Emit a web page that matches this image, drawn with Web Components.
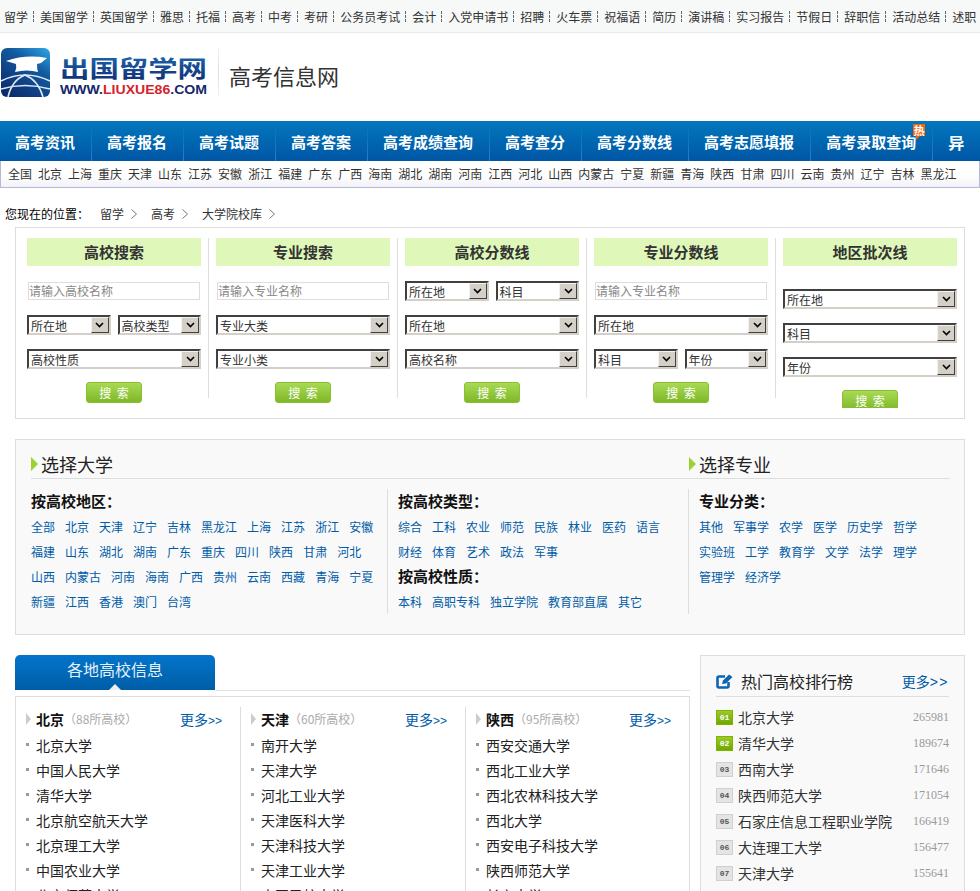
<!DOCTYPE html>
<html lang="zh-CN">
<head>
<meta charset="utf-8">
<title>高考信息网</title>
<style>
    html, body { margin: 0; padding: 0; }
    body {
        width: 980px;
        height: 891px;
        overflow: hidden;
        background: #fff;
        color: #333;
        font: 12px "Noto Sans CJK SC", sans-serif;
    }
    .lower { display: flex; gap: 10px; margin: 20px 15px 0; align-items: flex-start; }
</style>
</head>
<body>
<top-bar items="留学 美国留学 英国留学 雅思 托福 高考 中考 考研 公务员考试 会计 入党申请书 招聘 火车票 祝福语 简历 演讲稿 实习报告 节假日 辞职信 活动总结 述职"></top-bar>
<site-header>高考信息网</site-header>
<main-nav></main-nav>
<province-bar items="全国 北京 上海 重庆 天津 山东 江苏 安徽 浙江 福建 广东 广西 海南 湖北 湖南 河南 江西 河北 山西 内蒙古 宁夏 新疆 青海 陕西 甘肃 四川 云南 贵州 辽宁 吉林 黑龙江"></province-bar>
<bread-crumb items="留学 高考 大学院校库"></bread-crumb>

<search-panel>
    <search-col title="高校搜索">
        <form-row><text-box>请输入高校名称</text-box></form-row>
        <form-row><old-select>所在地</old-select><old-select>高校类型</old-select></form-row>
        <form-row><old-select>高校性质</old-select></form-row>
        <go-button></go-button>
    </search-col>
    <search-col title="专业搜索">
        <form-row><text-box>请输入专业名称</text-box></form-row>
        <form-row><old-select>专业大类</old-select></form-row>
        <form-row><old-select>专业小类</old-select></form-row>
        <go-button></go-button>
    </search-col>
    <search-col title="高校分数线">
        <form-row><old-select>所在地</old-select><old-select>科目</old-select></form-row>
        <form-row><old-select>所在地</old-select></form-row>
        <form-row><old-select>高校名称</old-select></form-row>
        <go-button></go-button>
    </search-col>
    <search-col title="专业分数线">
        <form-row><text-box>请输入专业名称</text-box></form-row>
        <form-row><old-select>所在地</old-select></form-row>
        <form-row><old-select>科目</old-select><old-select>年份</old-select></form-row>
        <go-button></go-button>
    </search-col>
    <search-col title="地区批次线" style="--lead: 23px">
        <form-row><old-select>所在地</old-select></form-row>
        <form-row><old-select>科目</old-select></form-row>
        <form-row><old-select>年份</old-select></form-row>
        <go-button></go-button>
    </search-col>
</search-panel>

<pick-panel>
    <pick-col slot="a" style="--w: 356px">
        <b-head>按高校地区：</b-head>
        <link-list items="全部 北京 天津 辽宁 吉林 黑龙江 上海 江苏 浙江 安徽 福建 山东 湖北 湖南 广东 重庆 四川 陕西 甘肃 河北 山西 内蒙古 河南 海南 广西 贵州 云南 西藏 青海 宁夏 新疆 江西 香港 澳门 台湾"></link-list>
    </pick-col>
    <pick-col slot="b" style="--w: 290px">
        <b-head>按高校类型：</b-head>
        <link-list items="综合 工科 农业 师范 民族 林业 医药 语言 财经 体育 艺术 政法 军事"></link-list>
        <b-head>按高校性质：</b-head>
        <link-list items="本科 高职专科 独立学院 教育部直属 其它"></link-list>
    </pick-col>
    <pick-col slot="c" style="--w: 250px">
        <b-head>专业分类：</b-head>
        <link-list items="其他 军事学 农学 医学 历史学 哲学 实验班 工学 教育学 文学 法学 理学 管理学 经济学"></link-list>
    </pick-col>
</pick-panel>

<div class="lower">
    <school-board>
        <school-col name="北京" count="88" items="北京大学 中国人民大学 清华大学 北京航空航天大学 北京理工大学 中国农业大学 北京师范大学"></school-col>
        <school-col name="天津" count="60" items="南开大学 天津大学 河北工业大学 天津医科大学 天津科技大学 天津工业大学 中国民航大学"></school-col>
        <school-col name="陕西" count="95" items="西安交通大学 西北工业大学 西北农林科技大学 西北大学 西安电子科技大学 陕西师范大学 长安大学"></school-col>
    </school-board>
    <rank-panel>
        <rank-row n="01" count="265981" hot>北京大学</rank-row>
        <rank-row n="02" count="189674" hot>清华大学</rank-row>
        <rank-row n="03" count="171646">西南大学</rank-row>
        <rank-row n="04" count="171054">陕西师范大学</rank-row>
        <rank-row n="05" count="166419">石家庄信息工程职业学院</rank-row>
        <rank-row n="06" count="156477">大连理工大学</rank-row>
        <rank-row n="07" count="155641">天津大学</rank-row>
        <rank-row n="08" count="155102">中国人民大学</rank-row>
    </rank-panel>
</div>

<script>
class Base extends HTMLElement {
    connectedCallback() {
        if (this.shadowRoot) return;
        this.attachShadow({ mode: 'open' });
        this.shadowRoot.innerHTML = `<style>${this.css()}</style>${this.html()}`;
    }
    list() {
        return (this.getAttribute('items') || '').split(' ').filter(Boolean);
    }
    html() { return '<slot></slot>'; }
    css() { return ':host { display: block; }'; }
}

class TopBar extends Base {
    css() {
        return `
            :host { display: flex; height: 32px; padding-left: 4px; overflow: hidden; white-space: nowrap;
                    align-items: center; background: #f7f8f8; border-bottom: 1px solid #e8eaea; }
            a { color: #333; text-decoration: none; flex: none; }
            i { flex: none; width: 0; height: 11px; margin: 0 6px 0 5px; border-left: 1px dashed #666; }
        `;
    }
    html() {
        return this.list().map(t => `<a href="#">${t}</a>`).join('<i></i>');
    }
}

class SiteHeader extends Base {
    css() {
        return `
            :host { display: flex; height: 74px; padding-top: 14px; align-items: flex-start; }
            svg { display: block; margin: 1px 10px 0 0; flex: none; }
            i { width: 1px; height: 49px; background: linear-gradient(#f4f4f4, #dcdcdc 50%, #f4f4f4); }
            span { margin-left: 10px; font-size: 22px; line-height: 56px; color: #333; }
        `;
    }
    html() {
        return `
            <svg width="208" height="50" viewBox="0 0 208 50">
                <defs>
                    <linearGradient id="ico" x1="0.9" y1="0" x2="0.2" y2="1">
                        <stop offset="0" stop-color="#2b9fdf"/>
                        <stop offset="0.35" stop-color="#135a9f"/>
                        <stop offset="1" stop-color="#0b2a6b"/>
                    </linearGradient>
                    <linearGradient id="word" x1="0" y1="0" x2="0" y2="1">
                        <stop offset="0" stop-color="#1f6fb8"/>
                        <stop offset="1" stop-color="#0d2a6e"/>
                    </linearGradient>
                </defs>
                <rect x="1" y="0" width="49" height="49" rx="6" fill="url(#ico)"/>
                <path d="M6 13 Q26 6 47 10 L41 15 L37 16 Q37 21 38 24 Q27 21 15 24 Q17 20 16 16 Z" fill="#fff"/>
                <path d="M1 33 Q25 21 50 33 M1 41 Q25 34 50 41" fill="none" stroke="#dfe9f3" stroke-width="1.4"/>
                <path d="M8 49 Q12 32 25 27 Q38 32 43 49" fill="none" stroke="#dfe9f3" stroke-width="1.6"/>
                <text x="60" y="29" font-family="Noto Sans CJK SC, sans-serif" font-weight="700" font-size="23"
                      textLength="147" lengthAdjust="spacingAndGlyphs" fill="url(#word)">出国留学网</text>
                <text x="60" y="46" font-family="Liberation Sans, sans-serif" font-weight="700" font-size="13"
                      textLength="147" lengthAdjust="spacingAndGlyphs" fill="#16286a">WWW.<tspan fill="#d7222b">LIUXUE86</tspan>.COM</text>
            </svg>
            <i></i><span><slot></slot></span>
        `;
    }
}

class MainNav extends Base {
    css() {
        return `
            :host { display: flex; height: 40px; overflow: hidden; background: linear-gradient(#0277bd, #0056a5); }
            a { position: relative; flex: none; height: 120px; padding: 8px 17px 0 15px;
                color: #fff; font-size: 15px; font-weight: 700; line-height: 26px; text-decoration: none; white-space: nowrap; }
            a::after { content: ''; position: absolute; top: 3px; right: 0; width: 1px; height: 37px;
                background: linear-gradient(rgba(120,185,230,0), rgba(120,185,230,.4)); }
            a.wrap { width: 16px; font-size: 16px; white-space: normal; }
            a.wrap::after { display: none; }
            em { position: absolute; left: 102px; top: 3px; width: 12px; height: 12px; background: #f4660c;
                 color: #fff; font: 700 11px/12px "Noto Sans CJK SC", sans-serif; text-align: center; }
            em::after { content: ''; position: absolute; left: 3px; top: 12px; border: 2px solid transparent;
                 border-top-color: #f4660c; border-left-color: #f4660c; }
        `;
    }
    html() {
        return ['高考资讯', '高考报名', '高考试题', '高考答案', '高考成绩查询', '高考查分', '高考分数线', '高考志愿填报']
            .map(t => `<a href="#">${t}</a>`).join('')
            + '<a href="#">高考录取查询<em>热</em></a><a href="#" class="wrap">异地高考</a>';
    }
}

class ProvinceBar extends Base {
    css() {
        return `
            :host { display: flex; gap: 6px; height: 26px; padding-left: 7px;
                    border: 1px solid #b5b9d6; border-width: 0 1px 1px; line-height: 26px;
                    background: linear-gradient(#fff 55%, #f1f1f8); }
            a { color: #333; text-decoration: none; white-space: nowrap; }
        `;
    }
    html() {
        return this.list().map(t => `<a href="#">${t}</a>`).join('');
    }
}

class BreadCrumb extends Base {
    css() {
        return `
            :host { display: flex; align-items: center; height: 27px; padding: 12px 0 0 5px; line-height: 24px; }
            b { font-weight: 400; color: #000; margin-right: 11px; }
            a { color: #333; text-decoration: none; }
            svg { margin: 0 14px 0 7px; }
        `;
    }
    html() {
        const arrow = '<svg width="6" height="10" viewBox="0 0 6 10"><path d="M.5 .5 L5.5 5 L.5 9.5" fill="none" stroke="#777"/></svg>';
        return '<b>您现在的位置：</b>' + this.list().map(t => `<a href="#">${t}</a>${arrow}`).join('');
    }
}

class SearchPanel extends Base {
    css() {
        return `
            :host { display: block; box-sizing: border-box; width: 950px; margin-left: 15px;
                    padding: 10px 7px 10px 11px; border: 1px solid #ddd; }
            div { display: flex; height: 170px; overflow: hidden; }
        `;
    }
    html() { return '<div><slot></slot></div>'; }
}

class SearchCol extends Base {
    css() {
        return `
            :host { display: block; flex: none; width: 174px; height: 160px;
                    padding-right: 7px; margin-right: 7px; border-right: 1px solid #ddd; }
            :host(:last-child) { padding: 0; margin: 0; border: 0; }
            h3 { margin: 0; height: 28px; background: #dff7b8; color: #333; text-align: center;
                 font-size: 15px; font-weight: 700; line-height: 27px; }
        `;
    }
    html() { return `<h3>${this.getAttribute('title')}</h3><slot></slot>`; }
}

class FormRow extends Base {
    css() {
        return `
            :host { display: flex; gap: 7px; height: 20px; margin-top: 14px; align-items: center; }
            :host(:first-child) { margin-top: var(--lead, 15px); }
        `;
    }
}

class TextBox extends Base {
    css() {
        return `
            :host { display: block; flex: 1; box-sizing: border-box; height: 18px; margin: 0 1px;
                    border: 1px solid #ddd; color: #888; line-height: 16px; white-space: nowrap; }
        `;
    }
}

class OldSelect extends Base {
    css() {
        return `
            :host { display: flex; flex: 1; min-width: 0; box-sizing: border-box; height: 20px; background: #fff;
                    border: 2px solid; border-color: #404040 #d4d0c8 #d4d0c8 #404040; color: #333; }
            span { flex: 1; padding-left: 2px; line-height: 17px; white-space: nowrap; overflow: hidden; }
            i { flex: none; display: flex; align-items: center; justify-content: center; box-sizing: border-box;
                width: 18px; height: 16px; background: #d4d0c8; border: 1px solid; border-color: #f4f2ee #404040 #404040 #f4f2ee; }
        `;
    }
    html() {
        return `<span><slot></slot></span>
            <i><svg width="9" height="6" viewBox="0 0 9 6"><path d="M1 1 L4.5 4.5 L8 1" fill="none" stroke="#000" stroke-width="1.6"/></svg></i>`;
    }
}

class GoButton extends Base {
    css() {
        return `
            :host { display: block; box-sizing: border-box; width: 56px; height: 21px; margin: 13px auto 0;
                    border: 1px solid #8abf31; border-radius: 3px; background: linear-gradient(#a8da55, #7fb827);
                    color: #fff; text-align: center; line-height: 19px; word-spacing: 3px; }
        `;
    }
    html() { return '搜 索'; }
}

class PickPanel extends Base {
    css() {
        return `
            :host { display: block; box-sizing: border-box; width: 950px; margin: 20px 0 0 15px;
                    border: 1px solid #ddd; background: #f9f9f9; padding: 0 14px 20px 15px; }
            header { display: flex; height: 38px; border-bottom: 1px solid #ddd; }
            h2 { display: flex; flex: none; align-items: center; margin: 0; width: 658px; height: 48px; font-size: 18px;
                 font-weight: 400; line-height: 48px; color: #222; }
            h2 i { flex: none; width: 0; height: 0; margin-right: 3px; border: 7px solid transparent;
                   border-left-color: #9ad234; border-right-width: 0; }
            .cols { display: flex; margin-top: 10px; height: 125px; }
        `;
    }
    html() {
        return `
            <header><h2><i></i>选择大学</h2><h2 style="width: auto"><i></i>选择专业</h2></header>
            <div class="cols"><slot name="a"></slot><slot name="b"></slot><slot name="c"></slot></div>
        `;
    }
}

class PickCol extends Base {
    css() {
        return `
            :host { display: block; flex: none; width: var(--w); height: 125px; }
            :host(:not([slot="a"])) { padding-left: 10px; }
            :host(:not([slot="c"])) { border-right: 1px solid #ddd; }
        `;
    }
}

class BHead extends Base {
    css() {
        return ':host { display: block; height: 25px; font-size: 15px; font-weight: 700; line-height: 23px; color: #111; }';
    }
}

class LinkList extends Base {
    css() {
        return `
            :host { display: flex; flex-wrap: wrap; column-gap: 10px; line-height: 25px; }
            a { color: #005ca8; text-decoration: none; white-space: nowrap; }
        `;
    }
    html() {
        return this.list().map(t => `<a href="#">${t}</a>`).join('');
    }
}

class SchoolBoard extends Base {
    css() {
        return `
            :host { display: block; flex: none; width: 675px; }
            .tabs { display: flex; height: 36px; margin-bottom: 5px; }
            .tab { position: relative; flex: none; width: 200px; height: 35px; border-radius: 5px 5px 0 0;
                   background: linear-gradient(#0275cb, #005da6); color: #e6f0fa; text-align: center;
                   font-size: 16px; line-height: 28px; }
            .tab::after { content: ''; position: absolute; left: 94px; bottom: 0; border: 6px solid transparent;
                   border-top-width: 0; border-bottom-color: #eef1f4; }
            .rule { flex: 1; height: 35px; border-bottom: 1px solid #e2e2e2; }
            .box { display: flex; padding-top: 10px; border: 1px solid #ddd; height: 300px; }
        `;
    }
    html() {
        return `
            <div class="tabs"><div class="tab">各地高校信息</div><div class="rule"></div></div>
            <div class="box"><slot></slot></div>
        `;
    }
}

class SchoolCol extends Base {
    css() {
        return `
            :host { display: block; flex: none; box-sizing: border-box; width: 225px; padding-left: 10px; border-right: 1px solid #ddd; }
            :host(:last-child) { border: 0; width: 223px; }
            header { display: flex; align-items: center; height: 23px; padding: 0 18px 2px 0; }
            header i { flex: none; width: 0; height: 0; margin-right: 5px; border: 6px solid transparent;
                       border-left-color: #ccc; border-right-width: 0; border-left-width: 5px; }
            b { font-size: 14px; color: #111; }
            small { font-size: 12px; color: #aaa; }
            header a { margin-left: auto; color: #005ca8; font-size: 14px; text-decoration: none; white-space: nowrap; }
            header a span { font-size: 12px; font-family: "Liberation Sans", sans-serif; }
            div { display: flex; align-items: center; height: 25px; font-size: 14px; color: #222; white-space: nowrap; }
            div::before { content: ''; flex: none; width: 3px; height: 3px; margin-right: 7px; background: #999; }
        `;
    }
    html() {
        return `
            <header><i></i><b>${this.getAttribute('name')}</b><small>（${this.getAttribute('count')}所高校）</small>
            <a href="#">更多<span>&gt;&gt;</span></a></header>
            ${this.list().map(t => `<div>${t}</div>`).join('')}
        `;
    }
}

class RankPanel extends Base {
    css() {
        return `
            :host { display: block; flex: none; box-sizing: border-box; width: 265px; height: 300px;
                    padding: 0 15px; border: 1px solid #ddd; background: #f9f9f9; }
            header { display: flex; align-items: center; height: 30px; padding-top: 10px; border-bottom: 1px solid #ddd; margin-bottom: 7px; }
            svg { flex: none; margin-right: 8px; }
            h3 { margin: 0; font-size: 16px; font-weight: 400; color: #222; }
            a { margin-left: auto; color: #005ca8; font-size: 14px; text-decoration: none; white-space: nowrap; }
            a span { font-family: "Liberation Sans", sans-serif; letter-spacing: 1.5px; }
        `;
    }
    html() {
        return `
            <header>
                <svg width="17" height="15" viewBox="0 0 17 15">
                    <path d="M9 2.5 H3 Q1.5 2.5 1.5 4 V12 Q1.5 13.5 3 13.5 H11 Q12.5 13.5 12.5 12 V8" fill="none" stroke="#0a66b4" stroke-width="2.6"/>
                    <path d="M6 10 L7 6.5 L13 .5 L16.5 3 L10 9.5 Z" fill="#0a66b4"/>
                </svg>
                <h3>热门高校排行榜</h3><a href="#">更多<span>&gt;&gt;</span></a>
            </header>
            <slot></slot>
        `;
    }
}

class RankRow extends Base {
    css() {
        return `
            :host { display: flex; align-items: center; height: 26px; font-size: 14px; color: #333; white-space: nowrap; }
            i { flex: none; box-sizing: border-box; width: 17px; height: 15px; margin: 0 5px 0 0; text-align: center;
                font: 700 8px/13px "Liberation Mono", monospace; color: #555;
                background: #e4e4e4; border: 1px solid #d0d0d0; }
            :host([hot]) i { color: #fff; background: linear-gradient(#9cc92c, #6fa800); border-color: #7fb300; }
            span { margin-left: auto; font: 12px "Liberation Serif", serif; color: #999; }
        `;
    }
    html() {
        return `<i>${this.getAttribute('n')}</i><slot></slot><span>${this.getAttribute('count')}</span>`;
    }
}

customElements.define('top-bar', TopBar);
customElements.define('site-header', SiteHeader);
customElements.define('main-nav', MainNav);
customElements.define('province-bar', ProvinceBar);
customElements.define('bread-crumb', BreadCrumb);
customElements.define('search-panel', SearchPanel);
customElements.define('search-col', SearchCol);
customElements.define('form-row', FormRow);
customElements.define('text-box', TextBox);
customElements.define('old-select', OldSelect);
customElements.define('go-button', GoButton);
customElements.define('pick-panel', PickPanel);
customElements.define('pick-col', PickCol);
customElements.define('b-head', BHead);
customElements.define('link-list', LinkList);
customElements.define('school-board', SchoolBoard);
customElements.define('school-col', SchoolCol);
customElements.define('rank-panel', RankPanel);
customElements.define('rank-row', RankRow);
</script>
</body>
</html>
